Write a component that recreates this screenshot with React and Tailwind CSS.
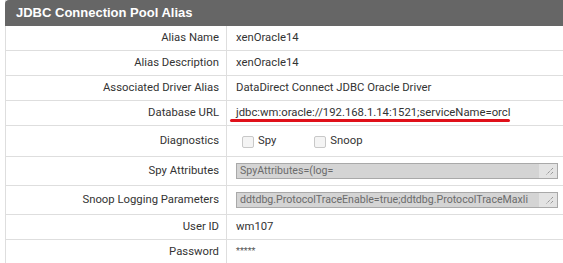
import React from 'react';

function Grip() {
    return (
        <svg width="10" height="10" viewBox="0 0 10 10" className="absolute right-[3px] bottom-[2px]">
            <path d="M9 2 L2 9 M9 6 L6 9" stroke="#777" strokeWidth="1" strokeDasharray="1 1" />
        </svg>
    );
}

function TextBox({ value }) {
    return (
        <div className="relative flex h-[16px] w-[322px] items-center overflow-hidden border border-[#a9a9a9] bg-[#d4d4d4]">
            <span className="flex-1 overflow-hidden whitespace-nowrap pl-[3px] text-[10.6px] text-[#6b6b6b]">{value}</span>
            <div className="relative h-full w-[18px] shrink-0 bg-[#e3e3e3]">
                <Grip />
            </div>
        </div>
    );
}

function Check({ label }) {
    return (
        <div className="flex items-center">
            <span className="h-[12px] w-[12px] rounded-[2px] border border-[#c8c8c8] bg-[#f4f4f4]" />
            <span className="ml-[4px]">{label}</span>
        </div>
    );
}

function Row({ label, h = 'h-[25px]', children }) {
    return (
        <div className={`flex ${h} border-b border-[#dedede]`}>
            <div className="flex w-[221px] items-center justify-end border-r border-[#dedede] pr-[7px]">{label}</div>
            <div className="relative flex flex-1 items-center pl-[9px]">{children}</div>
        </div>
    );
}

export default function App() {
    return (
        <div className="h-[263px] w-[563px] overflow-hidden bg-white pl-[5px] font-['Roboto',sans-serif] text-[11.3px] text-[#333]">
            <div className="w-[570px] border-l border-[#dedede]">
                {/* Header */}
                <div className="-ml-px flex h-[26px] items-center rounded-tl-[4px] bg-[#666] pl-[11px] font-['Liberation_Sans',sans-serif] text-[13px] font-bold text-white">
                    JDBC Connection Pool Alias
                </div>

                <Row label="Alias Name">xenOracle14</Row>
                <Row label="Alias Description">xenOracle14</Row>
                <Row label="Associated Driver Alias">DataDirect Connect JDBC Oracle Driver</Row>
                <Row label="Database URL">
                    <span>jdbc:wm:oracle://192.168.1.14:1521;serviceName=orcl</span>
                    <span className="absolute left-[3px] top-[18px] h-[3px] w-[280px] rounded-full bg-[#e0101a]" />
                </Row>
                <Row label="Diagnostics" h="h-[31px]">
                    <div className="flex gap-[38px] pl-[6px] pt-[1px]">
                        <Check label="Spy" />
                        <Check label="Snoop" />
                    </div>
                </Row>
                <Row label="Spy Attributes" h="h-[29px]">
                    <TextBox value="SpyAttributes=(log=" />
                </Row>
                <Row label="Snoop Logging Parameters" h="h-[29px]">
                    <TextBox value="ddtdbg.ProtocolTraceEnable=true;ddtdbg.ProtocolTraceMaxli" />
                </Row>
                <Row label="User ID">wm107</Row>
                <Row label="Password">
                    <span className="text-[9px] text-[#555]">*****</span>
                </Row>
            </div>
        </div>
    );
}
